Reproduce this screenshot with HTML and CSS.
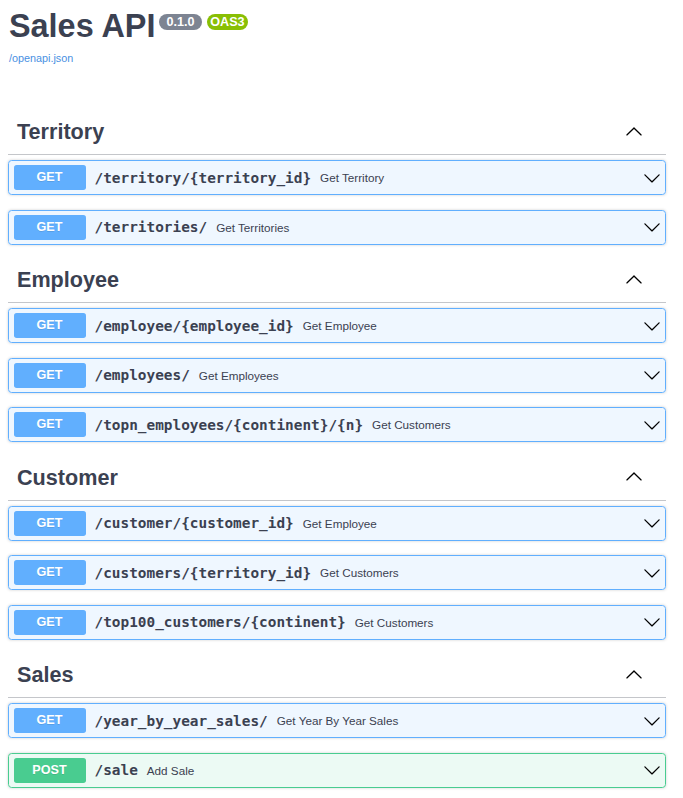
FILE: index.html
```html
<!DOCTYPE html>
<html lang="en">
<head>
<meta charset="utf-8">
<title>Sales API</title>
<link rel="stylesheet" href="styles.css">
</head>
<body>
<div class="page">
  <div class="info">
    <div class="title-row">
      <h2 class="title">Sales API</h2>
      <span class="badge version"> 0.1.0 </span>
      <span class="badge oas">OAS3</span>
    </div>
    <a class="link" href="#">/openapi.json</a>
  </div>

  <section class="tag-section">
    <h3 class="tag"><span class="tag-name">Territory</span>
      <svg class="arrow up" viewBox="0 0 20 20"><path transform="rotate(180 10 10.5)" d="M17.418 6.109c.272-.268.709-.268.979 0s.271.701 0 .969l-7.908 7.83c-.27.268-.707.268-.979 0l-7.908-7.83c-.27-.268-.27-.701 0-.969.271-.268.709-.268.979 0L10 13.25l7.418-7.141z"/></svg>
    </h3>
    <div class="opblock get"><div class="summary"><span class="method">GET</span><span class="path">/territory/{territory_id}</span><span class="desc">Get Territory</span>
      <svg class="arrow" viewBox="0 0 20 20"><path d="M17.418 6.109c.272-.268.709-.268.979 0s.271.701 0 .969l-7.908 7.83c-.27.268-.707.268-.979 0l-7.908-7.83c-.27-.268-.27-.701 0-.969.271-.268.709-.268.979 0L10 13.25l7.418-7.141z"/></svg></div></div>
    <div class="opblock get"><div class="summary"><span class="method">GET</span><span class="path">/territories/</span><span class="desc">Get Territories</span>
      <svg class="arrow" viewBox="0 0 20 20"><path d="M17.418 6.109c.272-.268.709-.268.979 0s.271.701 0 .969l-7.908 7.83c-.27.268-.707.268-.979 0l-7.908-7.83c-.27-.268-.27-.701 0-.969.271-.268.709-.268.979 0L10 13.25l7.418-7.141z"/></svg></div></div>
  </section>

  <section class="tag-section">
    <h3 class="tag"><span class="tag-name">Employee</span>
      <svg class="arrow up" viewBox="0 0 20 20"><path transform="rotate(180 10 10.5)" d="M17.418 6.109c.272-.268.709-.268.979 0s.271.701 0 .969l-7.908 7.83c-.27.268-.707.268-.979 0l-7.908-7.83c-.27-.268-.27-.701 0-.969.271-.268.709-.268.979 0L10 13.25l7.418-7.141z"/></svg>
    </h3>
    <div class="opblock get"><div class="summary"><span class="method">GET</span><span class="path">/employee/{employee_id}</span><span class="desc">Get Employee</span>
      <svg class="arrow" viewBox="0 0 20 20"><path d="M17.418 6.109c.272-.268.709-.268.979 0s.271.701 0 .969l-7.908 7.83c-.27.268-.707.268-.979 0l-7.908-7.83c-.27-.268-.27-.701 0-.969.271-.268.709-.268.979 0L10 13.25l7.418-7.141z"/></svg></div></div>
    <div class="opblock get"><div class="summary"><span class="method">GET</span><span class="path">/employees/</span><span class="desc">Get Employees</span>
      <svg class="arrow" viewBox="0 0 20 20"><path d="M17.418 6.109c.272-.268.709-.268.979 0s.271.701 0 .969l-7.908 7.83c-.27.268-.707.268-.979 0l-7.908-7.83c-.27-.268-.27-.701 0-.969.271-.268.709-.268.979 0L10 13.25l7.418-7.141z"/></svg></div></div>
    <div class="opblock get"><div class="summary"><span class="method">GET</span><span class="path">/topn_employees/{continent}/{n}</span><span class="desc">Get Customers</span>
      <svg class="arrow" viewBox="0 0 20 20"><path d="M17.418 6.109c.272-.268.709-.268.979 0s.271.701 0 .969l-7.908 7.83c-.27.268-.707.268-.979 0l-7.908-7.83c-.27-.268-.27-.701 0-.969.271-.268.709-.268.979 0L10 13.25l7.418-7.141z"/></svg></div></div>
  </section>

  <section class="tag-section">
    <h3 class="tag"><span class="tag-name">Customer</span>
      <svg class="arrow up" viewBox="0 0 20 20"><path transform="rotate(180 10 10.5)" d="M17.418 6.109c.272-.268.709-.268.979 0s.271.701 0 .969l-7.908 7.83c-.27.268-.707.268-.979 0l-7.908-7.83c-.27-.268-.27-.701 0-.969.271-.268.709-.268.979 0L10 13.25l7.418-7.141z"/></svg>
    </h3>
    <div class="opblock get"><div class="summary"><span class="method">GET</span><span class="path">/customer/{customer_id}</span><span class="desc">Get Employee</span>
      <svg class="arrow" viewBox="0 0 20 20"><path d="M17.418 6.109c.272-.268.709-.268.979 0s.271.701 0 .969l-7.908 7.83c-.27.268-.707.268-.979 0l-7.908-7.83c-.27-.268-.27-.701 0-.969.271-.268.709-.268.979 0L10 13.25l7.418-7.141z"/></svg></div></div>
    <div class="opblock get"><div class="summary"><span class="method">GET</span><span class="path">/customers/{territory_id}</span><span class="desc">Get Customers</span>
      <svg class="arrow" viewBox="0 0 20 20"><path d="M17.418 6.109c.272-.268.709-.268.979 0s.271.701 0 .969l-7.908 7.83c-.27.268-.707.268-.979 0l-7.908-7.83c-.27-.268-.27-.701 0-.969.271-.268.709-.268.979 0L10 13.25l7.418-7.141z"/></svg></div></div>
    <div class="opblock get"><div class="summary"><span class="method">GET</span><span class="path">/top100_customers/{continent}</span><span class="desc">Get Customers</span>
      <svg class="arrow" viewBox="0 0 20 20"><path d="M17.418 6.109c.272-.268.709-.268.979 0s.271.701 0 .969l-7.908 7.83c-.27.268-.707.268-.979 0l-7.908-7.83c-.27-.268-.27-.701 0-.969.271-.268.709-.268.979 0L10 13.25l7.418-7.141z"/></svg></div></div>
  </section>

  <section class="tag-section">
    <h3 class="tag"><span class="tag-name">Sales</span>
      <svg class="arrow up" viewBox="0 0 20 20"><path transform="rotate(180 10 10.5)" d="M17.418 6.109c.272-.268.709-.268.979 0s.271.701 0 .969l-7.908 7.83c-.27.268-.707.268-.979 0l-7.908-7.83c-.27-.268-.27-.701 0-.969.271-.268.709-.268.979 0L10 13.25l7.418-7.141z"/></svg>
    </h3>
    <div class="opblock get"><div class="summary"><span class="method">GET</span><span class="path">/year_by_year_sales/</span><span class="desc">Get Year By Year Sales</span>
      <svg class="arrow" viewBox="0 0 20 20"><path d="M17.418 6.109c.272-.268.709-.268.979 0s.271.701 0 .969l-7.908 7.83c-.27.268-.707.268-.979 0l-7.908-7.83c-.27-.268-.27-.701 0-.969.271-.268.709-.268.979 0L10 13.25l7.418-7.141z"/></svg></div></div>
    <div class="opblock post"><div class="summary"><span class="method">POST</span><span class="path">/sale</span><span class="desc">Add Sale</span>
      <svg class="arrow" viewBox="0 0 20 20"><path d="M17.418 6.109c.272-.268.709-.268.979 0s.271.701 0 .969l-7.908 7.83c-.27.268-.707.268-.979 0l-7.908-7.83c-.27-.268-.27-.701 0-.969.271-.268.709-.268.979 0L10 13.25l7.418-7.141z"/></svg></div></div>
  </section>
</div>
</body>
</html>
```

FILE: styles.css
```css
html, body {
  margin: 0;
  padding: 0;
  background: #fff;
}

body {
  font-family: "Liberation Sans", Arial, sans-serif;
  color: #3b4151;
}

.page {
  width: 658px;
  padding: 8px 0 0 8px;
}

.info {
  margin-bottom: 47px;
}

.title-row {
  display: flex;
  align-items: flex-start;
}

.title {
  margin: 0 0 0 1px;
  font-size: 32.4px;
  line-height: 37px;
  font-weight: 700;
  color: #3b4151;
}

.badge {
  display: inline-block;
  margin-top: 6px;
  margin-left: 4px;
  padding: 0 3.6px;
  border-radius: 57px;
  font-size: 12.6px;
  line-height: 16px;
  font-weight: 700;
  color: #fff;
  white-space: pre;
}

.badge.version {
  background: #7d8492;
}

.badge.oas {
  background: #89bf04;
  margin-left: 5px;
}

.link {
  display: block;
  margin-top: 7px;
  margin-left: 1px;
  font-size: 10.8px;
  line-height: 12px;
  color: #4990e2;
  text-decoration: none;
}

.tag {
  display: flex;
  align-items: center;
  margin: 0 0 5px;
  padding: 9px 23px 9px 9px;
  border-bottom: 1px solid rgba(59, 65, 81, 0.3);
  font-size: 21.6px;
  line-height: 25px;
  font-weight: 700;
  color: #3b4151;
}

.tag-name {
  flex: 1;
  position: relative;
  top: -1px;
}

.arrow {
  width: 18px;
  height: 18px;
  flex: none;
  fill: #000;
}

.arrow.up {
  margin-bottom: 4px;
}

.opblock {
  margin-bottom: 14.5px;
  border: 1px solid #61affe;
  border-radius: 3.6px;
  box-shadow: 0 0 3px rgba(0, 0, 0, 0.19);
  background: rgba(97, 175, 254, 0.1);
}

.opblock.post {
  border-color: #49cc90;
  background: rgba(73, 204, 144, 0.1);
}

.summary {
  display: flex;
  align-items: center;
  height: 25px;
  padding: 4px 4.5px;
}

.method {
  width: 72px;
  height: 25px;
  line-height: 25px;
  text-align: center;
  border-radius: 2.7px;
  background: #61affe;
  color: #fff;
  font-size: 12.6px;
  font-weight: 700;
  text-shadow: 0 1px 0 rgba(0, 0, 0, 0.1);
  flex: none;
}

.post .method {
  background: #49cc90;
}

.path {
  padding: 0 9px;
  font-family: "DejaVu Sans Mono", monospace;
  font-size: 14.4px;
  font-weight: 700;
  color: #3b4151;
}

.desc {
  flex: 1;
  font-size: 11.7px;
  color: #3b4151;
}
```
